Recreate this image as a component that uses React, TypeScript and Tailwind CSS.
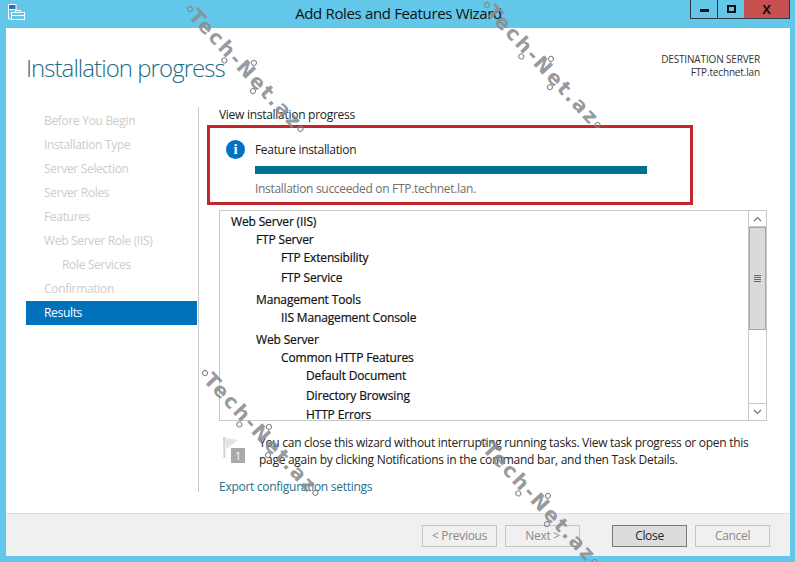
const F = "font-['Open_Sans','Noto_Sans',sans-serif]";

function Node({ className }: { className: string }) {
  return <span className={`absolute w-[6px] h-[6px] rounded-full border-[1.5px] border-[#85888a] ${className}`} />;
}

function Watermark({ x, y }: { x: number; y: number }) {
  return (
    <div className="absolute pointer-events-none" style={{ left: x, top: y }}>
      <div className="relative origin-left rotate-[47deg] w-[168px] h-[16px] pl-[4px] flex items-center text-[20px] leading-none font-bold tracking-[2.2px] text-[#8a8d8f]/90 whitespace-nowrap font-['DejaVu_Sans',sans-serif]">
        Tech-Net.az
        <Node className="left-[-3px] top-[5px]" />
        <Node className="left-[58px] top-[15px]" />
        <Node className="left-[80px] top-[-5px]" />
        <Node className="left-[100px] top-[15px]" />
        <Node className="left-[160px] top-[6px]" />
      </div>
    </div>
  );
}

const nav = [
  ["Before You Begin", 0],
  ["Installation Type", 0],
  ["Server Selection", 0],
  ["Server Roles", 0],
  ["Features", 0],
  ["Web Server Role (IIS)", 0],
  ["Role Services", 1],
  ["Confirmation", 0],
] as const;

const rows: [string, string, string][] = [
  ["Web Server (IIS)", "pl-[11px]", "mt-0"],
  ["FTP Server", "pl-[36px]", "mt-0"],
  ["FTP Extensibility", "pl-[61px]", "mt-0"],
  ["FTP Service", "pl-[61px]", "mt-[2px]"],
  ["Management Tools", "pl-[36px]", "mt-[4px]"],
  ["IIS Management Console", "pl-[61px]", "mt-0"],
  ["Web Server", "pl-[36px]", "mt-[4px]"],
  ["Common HTTP Features", "pl-[61px]", "mt-0"],
  ["Default Document", "pl-[86px]", "mt-0"],
  ["Directory Browsing", "pl-[86px]", "mt-[2px]"],
  ["HTTP Errors", "pl-[86px]", "mt-px"],
];

function Btn({ label, primary }: { label: string; primary?: boolean }) {
  return (
    <div
      className={
        primary
          ? "w-[75px] h-[22px] flex items-center justify-center text-[12px] text-[#222] bg-[#dcdcdc] border border-[#7a7a7a]"
          : "w-[75px] h-[22px] flex items-center justify-center text-[12px] text-[#8a8a8a] bg-[#f0f0f0] border border-[#c4c4c4]"
      }
    >
      {label}
    </div>
  );
}

export default function App() {
  return (
    <div className={`relative w-[795px] h-[562px] overflow-hidden bg-[#63c7ea] ${F} tracking-[-0.32px]`}>
      {/* Title bar */}
      <div className="relative h-[28px] flex items-start">
        <svg className="ml-[8px] mt-[4px]" width="17" height="16" viewBox="0 0 17 16" fill="none">
          <rect x="0.5" y="0.5" width="7.5" height="5" fill="#1f76b4" stroke="#fff" />
          <path d="M0.5 5.5V15H3M8 5.5V7" stroke="#fff" />
          <rect x="3.5" y="8.5" width="13" height="7" fill="#63c7ea" stroke="#fff" />
          <path d="M7.5 8.5V6.5h5v2M3.5 11.5h13" stroke="#fff" />
        </svg>
        <div className="absolute left-0 right-0 top-[3px] text-center text-[15px] leading-[20px] text-[#111] pl-[2px] tracking-[-0.35px]">
          Add Roles and Features Wizard
        </div>
        <div className="absolute right-[5px] top-0 flex h-[19px] border-x border-b border-[#2d3a40]">
          <div className="w-[27px] flex items-center justify-center border-r border-[#2d3a40]">
            <div className="w-[9px] h-[3px] mt-[3px] bg-[#111]" />
          </div>
          <div className="w-[26px] flex items-center justify-center">
            <div className="w-[9px] h-[8px] border-2 border-[#111]" />
          </div>
          <div className="w-[45px] flex items-center justify-center bg-[#c75050] text-[13px] font-bold text-[#111] leading-none">
            X
          </div>
        </div>
      </div>

      {/* Client area */}
      <div className="mx-[6px] w-[784px] h-[528px] bg-white flex flex-col">
        {/* Header */}
        <div className="h-[79px] flex items-start justify-between pr-[30px]">
          <div className="ml-[20px] mt-[22px] text-[24px] leading-[36px] font-light text-[#1d6d86] tracking-[-0.95px]">Installation progress</div>
          <div className="mt-[25px] text-right text-[10px] leading-[13px] text-[#333] tracking-[-0.15px]">
            <div>DESTINATION SERVER</div>
            <div>FTP.technet.lan</div>
          </div>
        </div>

        <div className="flex-1 flex min-h-0">
          {/* Navigation */}
          <div className="ml-[20px] w-[171px] pt-[2px]">
            {nav.map(([n, ind]) => (
              <div
                key={n}
                className={`h-[24px] flex items-center text-[12px] text-[#cccccc] ${ind ? "pl-[36px]" : "pl-[18px]"}`}
              >
                {n}
              </div>
            ))}
            <div className="h-[24px] flex items-center pl-[18px] text-[12px] text-white bg-[#0072bc]">Results</div>
          </div>
          <div className="w-px h-[385px] ml-px bg-[#c8c8c8]" />

          {/* Content */}
          <div className="flex-1 pl-[8px] min-w-0">
            <div className="pl-[12px] h-[18px] flex items-center text-[12px] text-[#222] -mt-px mb-px tracking-[-0.28px]">View installation progress</div>
            <div className="w-[486px] h-[80px] border-[3px] border-[#c4262e] relative pl-[45px] pt-[14px]">
              <div className="absolute left-[16px] top-[12px] w-[19px] h-[19px] rounded-full bg-[#0072c6] flex items-center justify-center text-white text-[15px] font-bold leading-none font-['Liberation_Serif',serif]">
                i
              </div>
              <div className="h-[16px] flex items-center text-[12px] text-[#222]">Feature installation</div>
              <div className="w-[392px] h-[8px] mt-[8px] bg-[#00708f]" />
              <div className="h-[16px] mt-[7px] flex items-center text-[12px] text-[#6f6f6f]">Installation succeeded on FTP.technet.lan.</div>
            </div>

            {/* List */}
            <div className="ml-[12px] mt-[5px] w-[548px] h-[211px] border border-[#c8c8c8] flex overflow-hidden">
              <div className="flex-1 pt-[2px] overflow-hidden text-[12px] text-[#111] tracking-[-0.15px] [-webkit-text-stroke:0.2px_#111]">
                {rows.map(([t, p, m]) => (
                  <div key={t} className={`${p} ${m} h-[18px] flex items-center whitespace-nowrap`}>
                    {t}
                  </div>
                ))}
              </div>
              <div className="w-[18px] flex flex-col border-l border-[#c8c8c8]">
                <div className="h-[16px] flex items-center justify-center border-b border-[#c8c8c8]">
                  <svg width="9" height="6" viewBox="0 0 9 6" fill="none"><path d="M1 5l3.5-3.5L8 5" stroke="#777" strokeWidth="1.2" /></svg>
                </div>
                <div className="h-[103px] bg-[#dadada] border border-[#a8a8a8] flex flex-col items-center justify-center gap-[1px]">
                  <div className="w-[7px] h-px bg-[#666]" />
                  <div className="w-[7px] h-px bg-[#666]" />
                  <div className="w-[7px] h-px bg-[#666]" />
                  <div className="w-[7px] h-px bg-[#666]" />
                </div>
                <div className="flex-1 bg-white" />
                <div className="h-[17px] flex items-center justify-center border-t border-[#c8c8c8]">
                  <svg width="9" height="6" viewBox="0 0 9 6" fill="none"><path d="M1 1l3.5 3.5L8 1" stroke="#777" strokeWidth="1.2" /></svg>
                </div>
              </div>
            </div>

            {/* Note */}
            <div className="flex ml-[15px] mt-[13px]">
              <svg className="mt-[3px] shrink-0" width="24" height="27" viewBox="0 0 24 27" fill="none">
                <path d="M2 0L2.5 21" stroke="#d4d4d4" strokeWidth="2" />
                <path d="M3 1l13 2-12 9z" fill="#e4e4e4" />
                <rect x="9" y="11" width="14" height="15" fill="#a9a9a9" />
                <text x="16" y="22.5" textAnchor="middle" fontSize="10" fill="#fff">1</text>
              </svg>
              <div className="ml-[13px] w-[500px] text-[12px] leading-[17px] text-[#222] tracking-[-0.28px]">
                You can close this wizard without interrupting running tasks. View task progress or open this page again by clicking Notifications in the command bar, and then Task Details.
              </div>
            </div>

            <div className="ml-[12px] mt-[11px] text-[12px] leading-[16px] text-[#1f6f8b] tracking-[-0.28px]">Export configuration settings</div>
          </div>
        </div>

        {/* Footer */}
        <div className="h-[43px] bg-[#f0f0f0] border-t border-[#dcdcdc] flex items-center pl-[416px]">
          <div className="flex gap-[8px] mt-[2px]">
            <Btn label="< Previous" />
            <Btn label="Next >" />
          </div>
          <div className="flex gap-[8px] ml-[32px] mt-[2px]">
            <Btn label="Close" primary />
            <Btn label="Cancel" />
          </div>
        </div>
      </div>

      <Watermark x={190} y={1} />
      <Watermark x={487} y={-3} />
      <Watermark x={205} y={365} />
      <Watermark x={484} y={434} />
    </div>
  );
}
